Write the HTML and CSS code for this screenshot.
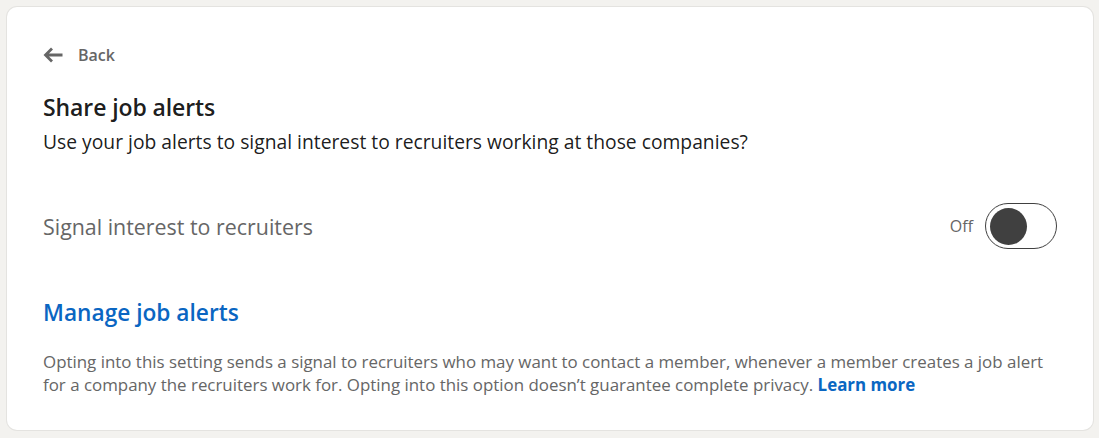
FILE: index.html
```html
<!DOCTYPE html>
<html>
<head>
<meta charset="utf-8">
<link rel="stylesheet" href="styles.css">
</head>
<body>
<div class="card">
  <a class="back" href="#">
    <svg class="back-icon" width="20" height="16" viewBox="0 0 20 16"><path d="M19.5 8H3M9 1.5L2.5 8 9 14.5" fill="none" stroke="#666" stroke-width="2.8"/></svg>
    <span>Back</span>
  </a>
  <h1 class="title">Share job alerts</h1>
  <p class="subtitle">Use your job alerts to signal interest to recruiters working at those companies?</p>
  <div class="setting">
    <span class="setting-label">Signal interest to recruiters</span>
    <div class="toggle-wrap">
      <span class="state">Off</span>
      <span class="toggle"><span class="knob"></span></span>
    </div>
  </div>
  <a class="manage" href="#">Manage job alerts</a>
  <p class="note">Opting into this setting sends a signal to recruiters who may want to contact a member, whenever a member creates a job alert for a company the recruiters work for. Opting into this option doesn’t guarantee complete privacy. <a class="learn" href="#">Learn more</a></p>
</div>
</body>
</html>
```
FILE: styles.css
```css
html, body { margin: 0; padding: 0; }
body {
  background: #f3f2ef;
  padding: 7px 6px 7px 7px;
  font-family: "Open Sans", "Noto Sans", sans-serif;
  height: 438px;
  box-sizing: border-box;
}
.card {
  background: #fff;
  border-radius: 10px;
  box-shadow: 0 0 0 1px rgba(0,0,0,0.06);
  padding: 36px 36px 0 36px;
  height: 423px;
  box-sizing: border-box;
}
.back {
  display: flex;
  align-items: center;
  gap: 15px;
  text-decoration: none;
  color: #666;
  font-weight: 600;
  font-size: 16px;
  height: 24px;
}
.back-icon { display: block; }
.title {
  margin: 25px 0 0;
  font-size: 23px;
  font-weight: 600;
  color: rgba(0,0,0,0.9);
  line-height: 30px;
  letter-spacing: -0.1px;
}
.subtitle {
  margin: 6px 0 0;
  font-size: 19.3px;
  color: rgba(0,0,0,0.9);
  line-height: 28px;
}
.setting {
  display: flex;
  align-items: center;
  justify-content: space-between;
  margin-top: 46px;
  height: 48px;
}
.setting-label { font-size: 21.4px; color: #666; }
.toggle-wrap { display: flex; align-items: center; gap: 12px; }
.state { font-size: 16px; color: #666; }
.toggle {
  width: 72px;
  height: 46px;
  box-sizing: border-box;
  border: 1.5px solid #404040;
  border-radius: 24px;
  display: flex;
  align-items: center;
  padding-left: 4px;
}
.knob { width: 37px; height: 37px; border-radius: 50%; background: #404040; }
.manage {
  display: block;
  margin-top: 48px;
  font-size: 22.7px;
  font-weight: 600;
  color: #0a66c2;
  text-decoration: none;
  line-height: 30px;
}
.note {
  margin: 22px 0 0;
  font-size: 16.9px;
  line-height: 23px;
  color: #666;
}
.learn {
  display: inline-block;
  line-height: 23px;
  vertical-align: top;
  color: #0a66c2;
  font-weight: 700;
  text-decoration: none;
}
```
